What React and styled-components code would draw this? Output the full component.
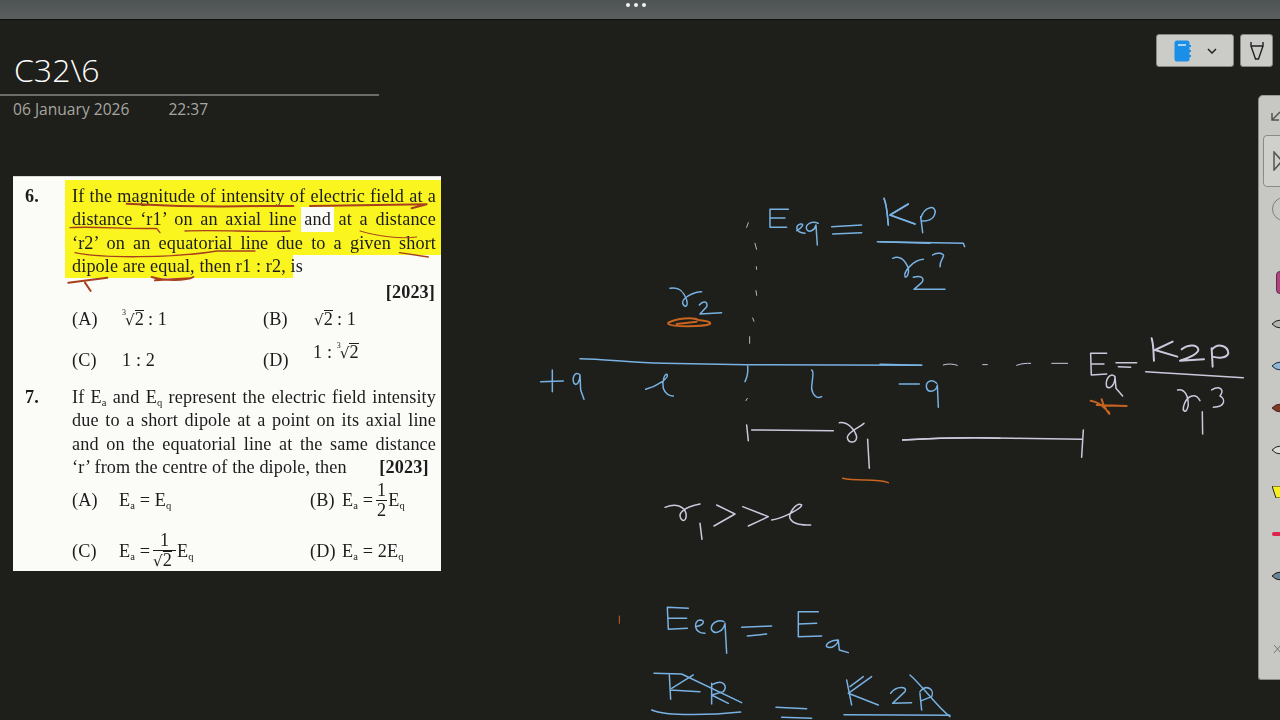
import React from 'react';
import styled, { createGlobalStyle } from 'styled-components';

const GlobalStyle = createGlobalStyle`
  html, body {
    margin: 0;
    padding: 0;
    background: #1e1e1b;
    overflow: hidden;
  }
`;

const Page = styled.div`
  position: relative;
  width: 1280px;
  height: 720px;
  overflow: hidden;
  display: flex;
  flex-direction: column;
  background: #1e1e1b;
`;

const TopBar = styled.div`
  height: 20px;
  flex: none;
  display: flex;
  justify-content: center;
  gap: 4px;
  padding-top: 3px;
  box-sizing: border-box;
  padding-right: 8px;
  background: linear-gradient(#4e5353, #5b5f5f);
  border-bottom: 1px solid #101010;
`;

const Dot = styled.span`
  width: 4px;
  height: 4px;
  border-radius: 50%;
  background: #f2f2f2;
`;

const Head = styled.div`
  height: 156px;
  flex: none;
  display: flex;
  justify-content: space-between;
  align-items: flex-start;
  padding-right: 7px;
`;

const Header = styled.div`
  width: 379px;
  padding-top: 30px;
`;

const Title = styled.div`
  font-family: "Open Sans", sans-serif;
  font-weight: 300;
  font-size: 32px;
  line-height: 40px;
  padding-left: 14px;
  color: #ffffff;
`;

const Rule = styled.div`
  height: 2px;
  margin-top: 4px;
  background: #6c6c68;
`;

const Meta = styled.div`
  display: flex;
  gap: 39px;
  padding: 3px 0 0 13px;
  font-family: "Open Sans", sans-serif;
  font-size: 15.6px;
  line-height: 20px;
  color: #a6a6a0;
`;

const Toolbar = styled.div`
  display: flex;
  gap: 6px;
  margin-top: 14px;
`;

const ToolbarButton = styled.div`
  box-sizing: border-box;
  width: ${(p) => p.$w}px;
  height: 33px;
  display: flex;
  align-items: center;
  justify-content: center;
  gap: ${(p) => p.$gap || 0}px;
  background: #cbcbc8;
  border: 1px solid #86867f;
  border-radius: 3px;
`;

const Card = styled.div`
  position: relative;
  box-sizing: border-box;
  width: 428px;
  height: 395px;
  margin-left: 13px;
  padding: 3px 5px 0 12px;
  background: #fbfbf8;
  border-top: 1px solid #d8d8d8;
  color: #1c1c1c;
  font-family: "Liberation Serif", serif;
  font-size: 18.2px;
  letter-spacing: 0.12px;
  overflow: hidden;
  filter: blur(0.3px);
`;

const Question = styled.div`
  display: grid;
  grid-template-columns: 47px 1fr;
  margin-bottom: ${(p) => p.$after || 0}px;
`;

const Num = styled.div`
  font-weight: 700;
  line-height: 23.4px;
  padding-top: ${(p) => p.$top || 0}px;
`;

const Body = styled.div`
  min-width: 0;
`;

const Line = styled.div`
  height: 23.3px;
  line-height: 23.3px;
  white-space: nowrap;
  text-align: justify;
  text-align-last: ${(p) => (p.$plain ? 'left' : 'justify')};
`;

const Marked = styled.div`
  margin: 0 -5px 0 -7px;
  padding: 0 5px 0 7px;
  background: #fbf51f;
  width: ${(p) => (p.$w ? `${p.$w}px` : 'auto')};
  padding-top: ${(p) => p.$top || 0}px;
  ${(p) => p.$w && 'box-sizing: border-box;'}
`;

const Plain = styled.span`
  background: #fbfbf8;
  padding: 2px 3px 3px;
  margin: 0 -3px;
`;

const Year = styled.div`
  text-align: right;
  font-weight: 700;
  line-height: 23px;
  padding: 0 1px 0 0;
  margin: 3px 0 -5px;
`;

const YearInline = styled.b`
  font-weight: 700;
  margin-left: 28px;
`;

const Options = styled.div`
  display: grid;
  grid-template-columns: ${(p) => p.$first}px 1fr;
  grid-auto-rows: ${(p) => p.$row}px;
  row-gap: ${(p) => p.$gap || 0}px;
`;

const Option = styled.div`
  display: flex;
  align-items: center;
  white-space: nowrap;
`;

const OptionLabel = styled.span`
  flex: none;
  width: ${(p) => p.$w}px;
`;

const Value = styled.span`
  display: inline-flex;
  align-items: center;
  margin-bottom: ${(p) => p.$raise || 0}px;
`;

const Symbol = styled.span`
  display: inline;
`;

const Sub = styled.sub`
  font-size: 10.5px;
  line-height: 0;
  vertical-align: -3px;
`;

const Root = styled.span`
  position: relative;
  display: inline-flex;
  align-items: baseline;
  margin-right: 4px;
  padding-left: ${(p) => (p.$indexed ? 3 : 0)}px;
`;

const RootIndex = styled.span`
  position: absolute;
  left: 0;
  top: -2px;
  font-size: 8px;
  line-height: 10px;
`;

const RootSign = styled.span`
  font-family: "DejaVu Sans", sans-serif;
  font-size: 15px;
`;

const RootValue = styled.span`
  border-top: 1px solid #1c1c1c;
  line-height: 17px;
`;

const Frac = styled.span`
  display: inline-flex;
  flex-direction: column;
  align-items: center;
  margin: 0 1px 0 3px;
  line-height: 19px;
`;

const FracTop = styled.span`
  border-bottom: 1px solid #1c1c1c;
  padding: 0 1px;
  align-self: stretch;
  text-align: center;
`;

const Marks = styled.svg`
  position: absolute;
  left: 0;
  top: 0;
  width: 428px;
  height: 395px;
  pointer-events: none;
  fill: none;
  stroke: #a8401e;
  stroke-width: 6;
  stroke-linecap: round;
  stroke-linejoin: round;
`;

const Board = styled.svg`
  position: absolute;
  left: 0;
  top: 0;
  width: 1280px;
  height: 720px;
  pointer-events: none;
  fill: none;
  stroke-width: 4.5;
  stroke-linecap: round;
  stroke-linejoin: round;
  filter: blur(0.3px);
`;

const Rail = styled.div`
  position: absolute;
  left: 1258px;
  top: 95px;
  width: 22px;
  height: 585px;
  box-sizing: border-box;
  display: flex;
  flex-direction: column;
  align-items: flex-start;
  padding-top: 11px;
  background: #c7c7c3;
  border-left: 1px solid #8b8b86;
  border-top: 1px solid #9a9a96;
  border-bottom: 1px solid #8b8b86;
  border-top-left-radius: 5px;
  border-bottom-left-radius: 3px;
  overflow: hidden;
`;

const RailArrow = styled.svg`
  flex: none;
  margin-left: 12px;
`;

const RailButton = styled.div`
  flex: none;
  width: 40px;
  height: 52px;
  box-sizing: border-box;
  margin: 14px 0 0 4px;
  display: flex;
  align-items: center;
  padding-left: 9px;
  border: 1px solid #8b8b86;
  border-radius: 4px;
  background: #cfcfcb;
`;

const RailCircle = styled.div`
  flex: none;
  width: 24px;
  height: 24px;
  box-sizing: border-box;
  margin: 10px 0 0 13px;
  border: 1px solid #7f7f7a;
  border-radius: 50%;
`;

const RailPink = styled.div`
  flex: none;
  width: 14px;
  height: 23px;
  box-sizing: border-box;
  margin: 50px 0 0 17px;
  background: #b0437f;
  border: 1px solid #5a3050;
  border-radius: 4px;
`;

const PenStack = styled.div`
  display: flex;
  flex-direction: column;
  gap: 30px;
  margin-top: 24px;
`;

const PenTip = styled.svg`
  display: block;
  margin-left: 13px;
  width: 9px;
  height: 12px;
`;

const RailCross = styled.svg`
  display: block;
  margin: 62px 0 0 15px;
  width: 7px;
  height: 10px;
`;

const pens = [
  { fill: '#b3b3b0', stroke: '#222' },
  { fill: '#8fb6d6', stroke: '#1d2a3a' },
  { fill: '#7d3a26', stroke: '#4a2015' },
  { fill: '#dcdcd8', stroke: '#222' },
  { fill: '#f5ee21', stroke: '#222', wide: true },
  { fill: '#e0234a', stroke: '#e0234a', thin: true },
  { fill: '#6d8292', stroke: '#1a1a1a' },
];

const Pen = ({ fill, stroke, wide, thin }) => (
  <PenTip viewBox="0 0 9 12">
    {wide && <path d="M0 0 L9 0 L9 12 L4 12 Z" fill={fill} stroke={stroke} />}
    {thin && <rect x="0" y="4" width="9" height="4" rx="2" fill={fill} />}
    {!wide && !thin && <path d="M9 2 L4 3 L0 6 L4 9 L9 10 Z" fill={fill} stroke={stroke} />}
  </PenTip>
);

const Radical = ({ index, children }) => (
  <Root $indexed={!!index}>
    {index && <RootIndex>{index}</RootIndex>}
    <RootSign>√</RootSign>
    <RootValue>{children}</RootValue>
  </Root>
);

const Ea = () => <Symbol>E<Sub>a</Sub></Symbol>;
const Eq = () => <Symbol>E<Sub>q</Sub></Symbol>;

const App = () => (
  <>
    <GlobalStyle />
    <Page>
      <TopBar>
        <Dot />
        <Dot />
        <Dot />
      </TopBar>
      <Head>
        <Header>
          <Title>C32\6</Title>
          <Rule />
          <Meta>
            <span>06 January 2026</span>
            <span>22:37</span>
          </Meta>
        </Header>
        <Toolbar>
          <ToolbarButton $w={78} $gap={15}>
            <svg width="18" height="22" viewBox="0 0 18 22">
              <rect x="0.5" y="0.5" width="15" height="21" rx="2.5" fill="#1b8ee8" />
              <rect x="4" y="4" width="8" height="2" fill="#a9d6f7" />
              <path d="M16 5v2M16 10v2M16 15v2" stroke="#1b8ee8" strokeWidth="2" />
            </svg>
            <svg width="10" height="6" viewBox="0 0 10 6">
              <path d="M1 1 L5 5 L9 1" fill="none" stroke="#222" strokeWidth="1.5" />
            </svg>
          </ToolbarButton>
          <ToolbarButton $w={33}>
            <svg width="14" height="20" viewBox="0 0 14 20">
              <path
                d="M1 1 L1 5 L13 5 L13 1 M1 5 L5.5 18 L8.5 18 L13 5"
                fill="none"
                stroke="#222"
                strokeWidth="1.4"
              />
            </svg>
          </ToolbarButton>
        </Toolbar>
      </Head>

      <Card>
        <Question $after={5}>
          <Num $top={5}>6.</Num>
          <Body>
            <Marked $top={5}>
              <Line>If the magnitude of intensity of electric field at a</Line>
            </Marked>
            <Marked>
              <Line>distance ‘r1’ on an axial line <Plain>and</Plain> at a distance</Line>
            </Marked>
            <Marked>
              <Line>‘r2’ on an equatorial line due to a given short</Line>
            </Marked>
            <Marked $w={228}>
              <Line $plain>dipole are equal, then r1 : r2, is</Line>
            </Marked>
            <Year>[2023]</Year>
            <Options $first={191} $row={41}>
              <Option>
                <OptionLabel $w={50}>(A)</OptionLabel>
                <Value><Radical index="3">2</Radical>: 1</Value>
              </Option>
              <Option>
                <OptionLabel $w={51}>(B)</OptionLabel>
                <Value><Radical>2</Radical>: 1</Value>
              </Option>
              <Option>
                <OptionLabel $w={50}>(C)</OptionLabel>
                <Value>1 : 2</Value>
              </Option>
              <Option>
                <OptionLabel $w={50}>(D)</OptionLabel>
                <Value $raise={16}>1 :&nbsp;<Radical index="3">2</Radical></Value>
              </Option>
            </Options>
          </Body>
        </Question>

        <Question>
          <Num>7.</Num>
          <Body>
            <Line>If <Ea /> and <Eq /> represent the electric field intensity</Line>
            <Line>due to a short dipole at a point on its axial line</Line>
            <Line>and on the equatorial line at the same distance</Line>
            <Line $plain>‘r’ from the centre of the dipole, then <YearInline>[2023]</YearInline></Line>
            <Options $first={238} $row={42} $gap={9}>
              <Option>
                <OptionLabel $w={47}>(A)</OptionLabel>
                <Value><Ea />&nbsp;=&nbsp;<Eq /></Value>
              </Option>
              <Option>
                <OptionLabel $w={32}>(B)</OptionLabel>
                <Value>
                  <Ea />&nbsp;=
                  <Frac>
                    <FracTop>1</FracTop>
                    <span>2</span>
                  </Frac>
                  <Eq />
                </Value>
              </Option>
              <Option>
                <OptionLabel $w={47}>(C)</OptionLabel>
                <Value>
                  <Ea />&nbsp;=
                  <Frac>
                    <FracTop>1</FracTop>
                    <Radical>2</Radical>
                  </Frac>
                  <Eq />
                </Value>
              </Option>
              <Option>
                <OptionLabel $w={32}>(D)</OptionLabel>
                <Value><Ea />&nbsp;=&nbsp;2<Eq /></Value>
              </Option>
            </Options>
          </Body>
        </Question>

        <Marks viewBox="39 18 1284 1185">
          <path d="M380 98 C500 105 650 108 780 105 L880 105 M930 105 L1280 100 L1235 112" />
          <path d="M210 170 C280 165 380 175 470 172 L480 185" strokeWidth="4" />
          <path d="M555 180 C650 175 780 185 870 180" strokeWidth="4" />
          <path d="M1080 180 C1130 195 1200 205 1250 198" strokeWidth="3" />
          <path d="M225 245 C300 262 520 262 650 240 L765 240" strokeWidth="4" />
          <path d="M1198 245 L1285 258" strokeWidth="4" />
          <path d="M205 335 L322 320 M255 335 L272 360" />
          <path d="M455 318 C490 330 560 330 580 318 M465 328 L570 322" />
        </Marks>
      </Card>

      {/* handwriting on the whiteboard, coords taken from 3x crops */}
      <Board viewBox="0 0 1280 720">
        <g transform="translate(530 190) scale(0.3333)">
          <g stroke="#78b2e2">
            <path d="M775 58 L720 58 L720 112 L770 112 M722 84 L765 84" />
            <path d="M800 122 C815 115 825 100 812 102 C795 105 795 128 825 130" />
            <path d="M865 100 C845 90 825 105 830 118 C838 130 855 120 858 105 L862 165" />
            <path d="M905 110 L995 105 M908 132 L995 128" />
            <path d="M1062 25 C1072 50 1072 80 1075 105 M1135 42 L1080 75 L1155 102" />
            <path d="M1042 155 L1200 160" />
            <path d="M420 295 C445 290 460 300 470 330 C475 350 465 355 458 340 C455 325 490 305 515 305" />
            <path d="M508 345 C520 330 535 335 530 350 L510 372 L575 368" />
            <path d="M150 506 C220 506 300 518 400 520 L650 524 L1175 526" />
            <path d="M653 528 C655 545 650 565 645 575" />
            <path d="M32 575 L100 573 M67 540 L67 605" />
            <path d="M150 555 C135 540 125 565 132 580 C140 590 150 575 150 555 L152 600 L162 628" />
            <path d="M347 598 C380 590 415 565 412 555 C405 545 395 575 400 595 C405 612 420 618 430 618" />
            <path d="M845 540 C855 545 845 570 845 595 C848 615 860 628 875 620" />
          </g>
          <path
            stroke="#c8641f"
            strokeWidth="6"
            d="M415 398 C440 385 490 380 505 390 C525 392 545 395 540 402 C520 410 430 412 415 402 Z M440 402 L500 395"
          />
          <path
            stroke="#b9b9b4"
            strokeWidth="3"
            d="M655 98 L650 112 M675 160 L680 178 M679 230 L680 238 M678 302 L680 316 M668 384 L672 394 M659 440 L659 460 M652 625 L648 632"
          />
        </g>

        <g transform="translate(880 190) scale(0.3333)">
          <g stroke="#78b2e2">
            <path d="M12 25 C22 50 22 80 25 105 M85 42 L30 75 L105 102" />
            <path d="M122 80 L128 128 M122 85 C135 45 170 45 165 70 C160 90 140 95 125 92" />
            <path d="M0 155 L250 160 L254 170" />
            <path d="M38 205 C60 195 75 210 85 235 C88 250 80 265 75 260 C70 245 100 210 130 208" />
            <path d="M100 262 C125 255 135 265 125 278 L102 298 L195 298" />
            <path d="M158 195 C170 185 195 190 190 200 C185 210 180 215 180 230" />
            <path d="M0 523 L125 526" />
            <path d="M58 582 L118 582" />
            <path d="M170 580 C155 565 135 575 140 595 C145 610 170 605 172 585 L175 652" />
          </g>
          <g stroke="#cdc8dc">
            <path d="M190 525 C205 520 220 522 232 526 M308 524 L322 524 M410 526 C425 520 440 520 452 520 M515 520 L563 520" strokeWidth="3" />
            <path d="M680 490 L632 490 L634 555 L680 552 M634 522 L672 522" />
            <path d="M708 518 L770 518 M715 530 L752 532" />
            <path d="M705 560 C690 545 675 570 680 590 C690 600 705 585 705 560 L708 595 L728 618" />
            <path d="M815 445 C822 470 820 490 822 512 M878 455 L825 480 L892 500" strokeWidth="6" />
            <path d="M905 478 C920 465 950 460 955 478 C958 490 925 505 900 512 L972 508" strokeWidth="6" />
            <path d="M995 475 L998 530 M995 480 C1015 455 1045 470 1045 490 C1040 505 1015 505 998 500" strokeWidth="6" />
            <path d="M797 545 L1090 563" />
            <path d="M893 600 C915 595 925 620 925 645 C920 675 905 665 912 645 C920 620 945 605 960 632" />
            <path d="M995 600 C1020 585 1035 600 1020 618 C1035 625 1040 650 1000 652" />
            <path d="M967 665 L968 732" />
            <path d="M68 750 C150 745 300 742 400 745 L605 748 M610 720 L605 802" />
          </g>
          <path
            stroke="#c8641f"
            strokeWidth="6"
            d="M632 632 C650 635 660 640 688 668 M665 628 C668 640 678 660 688 672 M650 645 L740 648"
          />
        </g>

        <g transform="translate(600 420) scale(0.3333)">
          <g stroke="#cdc8dc">
            <path d="M440 15 L445 62 M455 30 L700 32" />
            <path d="M718 8 C745 5 765 30 770 50 C770 70 745 72 742 52 C745 35 775 25 792 10" />
            <path d="M803 58 L808 145" />
            <path d="M908 60 C1000 55 1100 50 1200 55" />
            <path d="M195 262 C225 250 250 255 258 280 C262 310 240 305 240 285 C245 265 285 255 300 252" />
            <path d="M300 310 L306 358" />
            <path d="M350 255 L405 282 L342 318 M428 260 L505 290 L445 318" />
            <path d="M515 300 C550 295 605 265 605 255 C590 245 565 280 570 295 C580 315 610 315 632 315" />
          </g>
          <path stroke="#c8641f" d="M728 175 C770 185 830 175 865 188" />
          <path stroke="#c8641f" strokeWidth="3" d="M58 588 L58 610" />
          <g stroke="#78b2e2">
            <path d="M265 565 L202 562 L205 628 L262 625 M205 595 L260 595" />
            <path d="M287 620 C315 615 315 600 300 600 C280 602 280 640 315 640" />
            <path d="M372 605 C350 595 330 615 335 630 C345 645 370 635 375 610 L380 700" />
            <path d="M425 622 L515 618 M442 648 L500 642" />
            <path d="M655 575 L595 575 L595 650 L665 648 M597 612 L650 610" />
            <path d="M712 660 C690 660 675 675 680 680 C695 690 715 670 715 660 L718 690 L745 698" />
            <path d="M162 760 L245 762 L425 848 M208 765 L212 838 M210 810 L300 815 M215 805 L280 765" />
            <path d="M335 790 L335 852 M335 795 C370 775 385 800 370 815 L335 825 L385 850" />
            <path d="M155 870 C200 890 340 885 422 876" />
            <path d="M528 862 L620 866 M545 892 L635 895" />
            <path d="M740 780 L755 855 M815 770 L745 820 L835 855 M750 800 L790 770" />
            <path d="M872 820 C890 795 925 800 915 815 L878 850 L935 848" />
            <path d="M960 820 L965 870 M960 815 C980 790 1005 810 995 830 L965 842 M930 765 C970 800 1010 860 1050 890" />
            <path d="M732 884 L1050 886" />
          </g>
        </g>
      </Board>

      <Rail>
        <RailArrow width="14" height="14" viewBox="0 0 14 14">
          <path d="M1 13 L9 5 M1 6 L1 13 L8 13" fill="none" stroke="#55554f" strokeWidth="1.5" />
        </RailArrow>
        <RailButton>
          <svg width="10" height="20" viewBox="0 0 10 20">
            <path d="M1 1 L9 10 L1 19 Z" fill="none" stroke="#55554f" strokeWidth="1.5" />
          </svg>
        </RailButton>
        <RailCircle />
        <RailPink />
        <PenStack>
          {pens.map((pen, i) => (
            <Pen key={i} {...pen} />
          ))}
        </PenStack>
        <RailCross viewBox="0 0 7 10">
          <path d="M0 1 L7 9 M0 9 L7 1" stroke="#77776f" fill="none" />
        </RailCross>
      </Rail>
    </Page>
  </>
);

export default App;
